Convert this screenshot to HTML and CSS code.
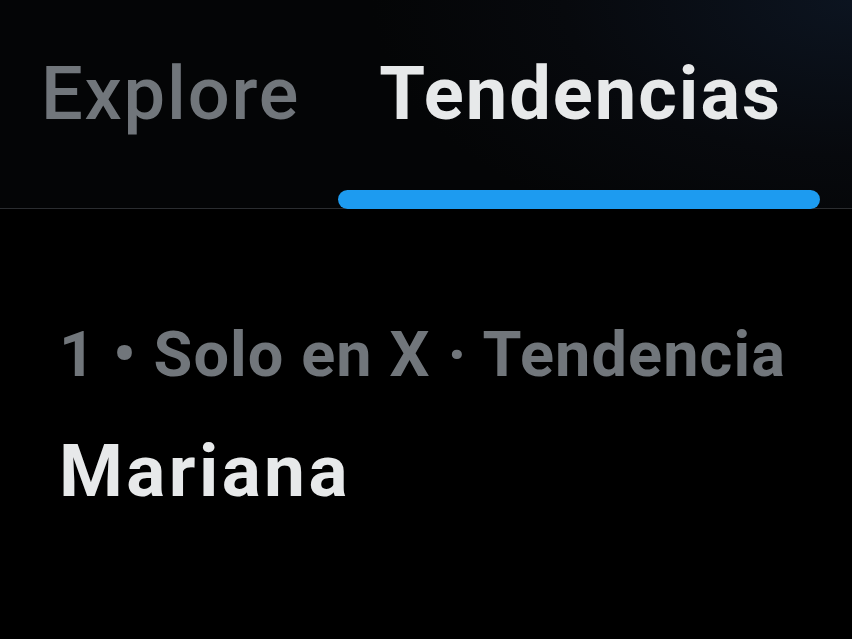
FILE: index.html
```html
<!DOCTYPE html>
<html lang="es">
<head>
<meta charset="utf-8">
<title>Tendencias</title>
<link rel="stylesheet" href="styles.css">
</head>
<body>
<div class="page">
  <header class="header">
    <nav class="tabs">
      <div class="tab tab-muted"><span class="tab-label">Explore</span></div>
      <div class="tab tab-active"><span class="tab-label">Tendencias</span><span class="indicator"></span></div>
    </nav>
  </header>
  <section class="trend">
    <div class="meta">1 • Solo en X · Tendencia</div>
    <div class="name">Mariana</div>
  </section>
</div>
</body>
</html>
```

FILE: styles.css
```css
* { box-sizing: border-box; margin: 0; padding: 0; }
html, body { width: 852px; height: 639px; background: #000; overflow: hidden; }
body { font-family: Roboto, "Noto Sans", "Liberation Sans", sans-serif; }
.page { width: 852px; height: 639px; background: #000; }
.header {
  height: 209px;
  background: radial-gradient(ellipse 480px 260px at 100% 0%, #0c1420 0%, #07090d 60%, #040506 100%);
  border-bottom: 1px solid #2b2d30;
}
.tabs { display: flex; height: 100%; padding-left: 41px; }
.tab { position: relative; display: flex; align-items: flex-start; padding-top: 51px; }
.tab-label { font-size: 74px; line-height: 86px; letter-spacing: 1.8px; }
.tab-muted .tab-label { color: #71767b; font-weight: 500; }
.tab-muted { margin-right: 79px; }
.tab-active .tab-label { color: #e7e9ea; font-weight: 700; letter-spacing: 2px; }
.indicator {
  position: absolute; left: -41px; right: -38px; bottom: -1px;
  height: 19px; border-radius: 10px; background: #1d9bf0;
}
.trend { padding: 109px 0 0 59px; }
.meta { color: #71767b; font-size: 63px; line-height: 74px; font-weight: 700; letter-spacing: 1.1px; }
.name { color: #e7e9ea; font-size: 73px; line-height: 86px; font-weight: 700; margin-top: 36px; letter-spacing: 3.4px; }
```
